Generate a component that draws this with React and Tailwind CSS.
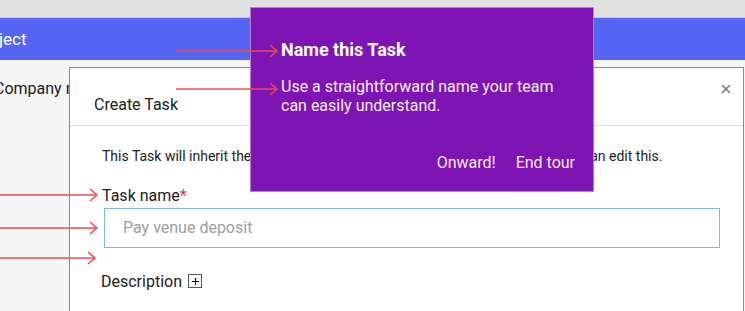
import React from 'react';
import { X, Plus } from 'lucide-react';

const arrows = [
  { x1: 176, x2: 277, y: 51 },
  { x1: 176, x2: 277, y: 89 },
  { x1: 0, x2: 97, y: 195 },
  { x1: 0, x2: 97, y: 228 },
  { x1: 0, x2: 95, y: 258 },
];

const Arrows = () => (
  <svg className="absolute inset-0 pointer-events-none" width="745" height="311">
    {arrows.map((a, i) => (
      <g key={i} stroke="#f04a4a" strokeWidth="1.5" fill="none">
        <line x1={a.x1} y1={a.y} x2={a.x2} y2={a.y} />
        <polyline points={`${a.x2 - 7},${a.y - 6} ${a.x2},${a.y} ${a.x2 - 7},${a.y + 6}`} />
      </g>
    ))}
  </svg>
);

export default function App() {
  return (
    <div
      className="relative w-[745px] h-[311px] overflow-hidden bg-[#f5f5f5] text-[#212121]"
      style={{ fontFamily: 'Roboto, "Noto Sans", sans-serif' }}
    >
      {/* page behind the dialog */}
      <div className="h-[18px] bg-[#e0e0e0] border-b border-[#c8c8c8]" />
      <div className="h-[42px] bg-[#5566f5] flex items-center text-white text-[17px]">
        <span className="-ml-px mt-[2px]">ject</span>
      </div>
      <div className="pt-[17px] -ml-[6px] text-[16px] whitespace-nowrap">Company name</div>

      {/* Create Task dialog */}
      <div className="absolute left-[69px] top-[67px] w-[675px] h-[260px] bg-white border border-[#8a8a8a]">
        <div className="h-[58px] flex items-center justify-between pl-6 pr-[10px] border-b border-[#e0e0e0]">
          <span className="text-[16px] mt-[16px]">Create Task</span>
          <X className="w-[14px] h-[14px] text-[#777] -mt-[16px]" strokeWidth={2.5} />
        </div>
        <div className="px-8 pt-[21px]">
          <p className="text-[14px] leading-[18px] whitespace-nowrap">
            This Task will inherit the permissions of its Project so anyone working on this can edit this.
          </p>
          <label className="block mt-[21px] text-[16px] leading-[20px]">
            Task name<span className="text-[#e53935]">*</span>
          </label>
          <div className="mt-[2px] ml-[2px] w-[616px] h-[40px] border border-[#7cb8e2] flex items-center pl-[18px] text-[16px] text-[#9e9e9e]">
            Pay venue deposit
          </div>
          <div className="mt-[22px] -ml-px flex items-center gap-[6px] text-[16px]">
            <span>Description</span>
            <span className="w-[14px] h-[14px] -mt-[2px] border border-[#555] flex items-center justify-center">
              <Plus className="w-[11px] h-[11px] text-[#111]" strokeWidth={2.5} />
            </span>
          </div>
        </div>
      </div>

      {/* tour tooltip */}
      <div className="absolute left-[250px] top-[7px] w-[344px] h-[185px] bg-[#7e14b4] border border-[#b37fd9] text-white pl-[30px] pr-[18px] flex flex-col">
        <div className="mt-[31px] text-[18px] font-bold leading-[22px]">Name this Task</div>
        <p className="mt-[16px] pr-[20px] text-[16px] leading-[19px] text-[#f5eefa]">
          Use a straightforward name your team can easily understand.
        </p>
        <div className="mt-auto mb-[16px] flex justify-end gap-[20px] text-[16px] text-[#f5eefa]">
          <span>Onward!</span>
          <span>End tour</span>
        </div>
      </div>

      <Arrows />
    </div>
  );
}
